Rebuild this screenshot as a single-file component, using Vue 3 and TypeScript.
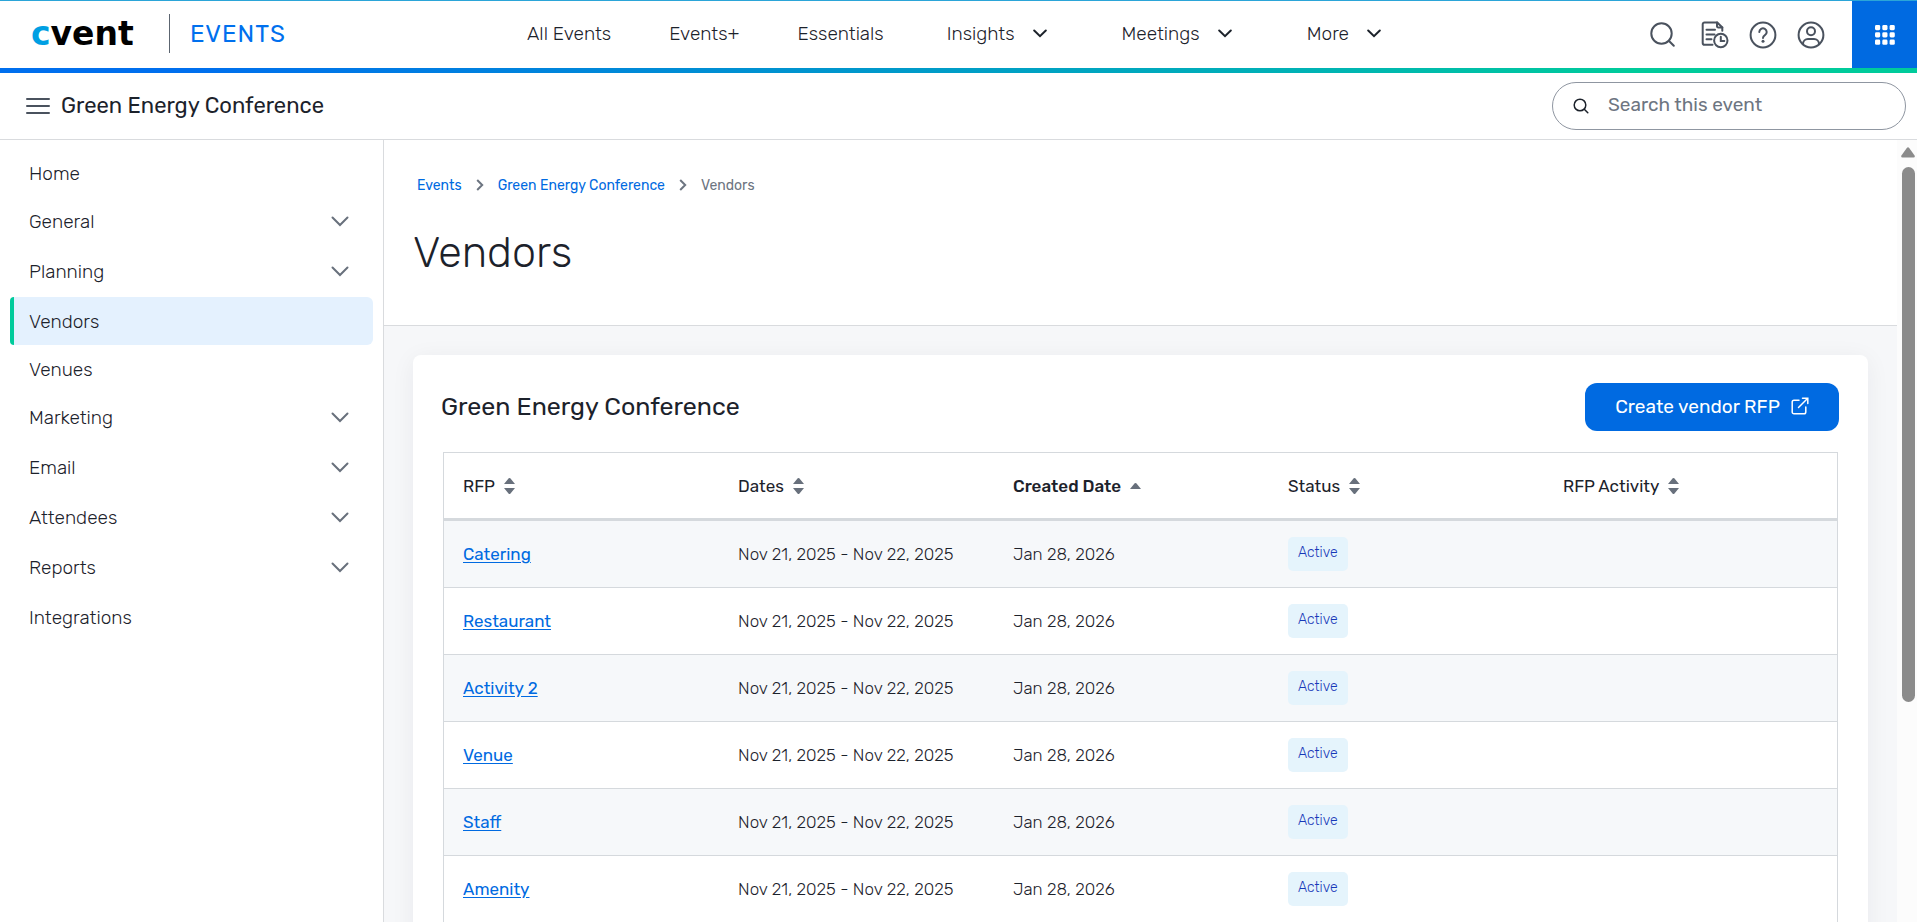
<script setup lang="ts">
import { ref } from 'vue'

interface NavItem {
  label: string
  menu?: boolean
}

interface Rfp {
  name: string
  dates: string
  created: string
  status: string
}

const topNav: NavItem[] = [
  { label: 'All Events' },
  { label: 'Events+' },
  { label: 'Essentials' },
  { label: 'Insights', menu: true },
  { label: 'Meetings', menu: true },
  { label: 'More', menu: true },
]

const sideNav: NavItem[] = [
  { label: 'Home' },
  { label: 'General', menu: true },
  { label: 'Planning', menu: true },
  { label: 'Vendors' },
  { label: 'Venues' },
  { label: 'Marketing', menu: true },
  { label: 'Email', menu: true },
  { label: 'Attendees', menu: true },
  { label: 'Reports', menu: true },
  { label: 'Integrations' },
]

const columns: string[] = ['RFP', 'Dates', 'Created Date', 'Status', 'RFP Activity']
const sortedBy = ref('Created Date')
const current = ref('Vendors')
const query = ref('')

const rows: Rfp[] = ['Catering', 'Restaurant', 'Activity 2', 'Venue', 'Staff', 'Amenity'].map((name) => ({
  name,
  dates: 'Nov 21, 2025 - Nov 22, 2025',
  created: 'Jan 28, 2026',
  status: 'Active',
}))
</script>

<template>
  <div class="app">
    <header class="topbar">
      <div class="brand">
        <a class="logo" href="#" aria-label="cvent"><span class="logo-c">c</span>vent</a>
        <span class="brand-rule"></span>
        <span class="product">EVENTS</span>
      </div>
      <nav class="topnav" aria-label="Main">
        <template v-for="item in topNav" :key="item.label">
          <button v-if="item.menu" type="button" class="topnav-item topnav-menu">
            {{ item.label }}
            <svg width="14" height="9" viewBox="0 0 14 9" aria-hidden="true"><path d="M1.2 1.5 7 7.2l5.8-5.7" /></svg>
          </button>
          <a v-else href="#" class="topnav-item">{{ item.label }}</a>
        </template>
      </nav>
      <div class="tools">
        <button type="button" aria-label="Search">
          <svg width="32" height="28" viewBox="0 0 32 28"><circle cx="12.500" cy="12.500" r="10.200" /><path d="m19.800 19.800 5 5" /></svg>
        </button>
        <button type="button" aria-label="Recent items">
          <svg width="28" height="28" viewBox="0 0 28 28">
            <path d="M11.500 23.700H3.500a1.800 1.800 0 0 1-1.800-1.800V3.300a1.800 1.800 0 0 1 1.800-1.800h12.800l5 5v3.200" />
            <path d="M16 1.500v3.700a1.300 1.300 0 0 0 1.300 1.300h4M5.500 8.700h8.500M5.500 13.500h8M5.500 18.300h5" />
            <circle cx="19.800" cy="19.500" r="6.700" /><path d="M19.800 15.800v4.200h3.500" />
          </svg>
        </button>
        <button type="button" aria-label="Help">
          <svg width="28" height="28" viewBox="0 0 28 28">
            <circle cx="14" cy="14" r="12.400" />
            <path d="M10.300 11a3.700 3.700 0 1 1 5.600 3.200c-1.300.8-1.900 1.300-1.900 2.800" /><circle class="dot" cx="14" cy="20.300" r="1.500" />
          </svg>
        </button>
        <button type="button" aria-label="Account">
          <svg width="28" height="28" viewBox="0 0 28 28">
            <circle cx="14" cy="14" r="12.400" /><circle cx="14" cy="10.200" r="4" />
            <path d="M6 23.200c0-3.300 2.300-5.200 5-5.200h6c2.700 0 5 1.900 5 5.200" />
          </svg>
        </button>
        <button type="button" class="apps" aria-label="Applications">
          <svg width="20" height="20" viewBox="0 0 20 20">
            <template v-for="r in 3" :key="r">
              <rect v-for="c in 3" :key="c" :x="(c - 1) * 7.3" :y="(r - 1) * 7.3" width="5.200" height="5.200" rx="1.400" />
            </template>
          </svg>
        </button>
      </div>
    </header>

    <div class="eventbar">
      <button type="button" class="burger" aria-label="Toggle navigation">
        <svg width="24" height="18" viewBox="0 0 24 18"><path d="M1 2h22M1 9h22M1 16h22" /></svg>
      </button>
      <span class="event-name">Green Energy Conference</span>
      <label class="search">
        <svg width="16" height="16" viewBox="0 0 16 16" aria-hidden="true"><circle cx="7" cy="7" r="5.800" /><path d="m11.300 11.300 3.500 3.500" /></svg>
        <input v-model="query" type="search" placeholder="Search this event" aria-label="Search this event" />
      </label>
    </div>

    <div class="body">
      <nav class="sidebar" aria-label="Event">
        <template v-for="item in sideNav" :key="item.label">
          <button v-if="item.menu" type="button" class="side-item side-menu">
            {{ item.label }}
            <svg width="18" height="11" viewBox="0 0 18 11" aria-hidden="true"><path d="m1.500 1.500 7.500 7.500 7.500-7.500" /></svg>
          </button>
          <a v-else href="#" class="side-item" :class="{ active: item.label === current }">{{ item.label }}</a>
        </template>
      </nav>

      <main class="main">
        <div class="page-head">
          <nav class="crumbs" aria-label="Breadcrumb">
            <a href="#">Events</a>
            <svg width="8" height="12" viewBox="0 0 8 12" aria-hidden="true"><path d="m1.200 1 5 5-5 5" /></svg>
            <a href="#">Green Energy Conference</a>
            <svg width="8" height="12" viewBox="0 0 8 12" aria-hidden="true"><path d="m1.200 1 5 5-5 5" /></svg>
            <span>Vendors</span>
          </nav>
          <h1>Vendors</h1>
        </div>

        <section class="card">
          <div class="card-head">
            <h2>Green Energy Conference</h2>
            <button type="button" class="create">
              Create vendor RFP
              <svg width="18" height="18" viewBox="0 0 18 18" aria-hidden="true">
                <path d="M8 3.200H3a1.800 1.800 0 0 0-1.800 1.800v10A1.800 1.800 0 0 0 3 16.800h10a1.800 1.800 0 0 0 1.800-1.800v-5M11.500 1.200h5.300v5.300M16.500 1.500 7.500 10.500" />
              </svg>
            </button>
          </div>
          <table>
            <thead>
              <tr>
                <th v-for="col in columns" :key="col" scope="col" :aria-sort="col === sortedBy ? 'ascending' : 'none'">
                  <button type="button" class="sort" :class="{ sorted: col === sortedBy }">
                    {{ col }}
                    <svg v-if="col === sortedBy" width="11" height="18" viewBox="0 0 11 18" aria-hidden="true"><path d="M0 12 4.700 6.300q.8-.8 1.600 0L11 12z" /></svg>
                    <svg v-else width="11" height="18" viewBox="0 0 11 18" aria-hidden="true"><path d="M0 7 4.700 1.300q.8-.8 1.600 0L11 7zM0 11l4.700 5.700q.8.8 1.600 0L11 11z" /></svg>
                  </button>
                </th>
              </tr>
            </thead>
            <tbody>
              <tr v-for="row in rows" :key="row.name">
                <td><a href="#">{{ row.name }}</a></td>
                <td>{{ row.dates }}</td>
                <td>{{ row.created }}</td>
                <td><span class="badge">{{ row.status }}</span></td>
                <td></td>
              </tr>
            </tbody>
          </table>
        </section>
      </main>

      <div class="scrollbar" aria-hidden="true">
        <svg width="14" height="11" viewBox="0 0 14 11"><path d="M5.800 1 .4 8.600Q-.4 10.500 1.500 10.500h11q1.900 0 1.100-1.900L8.200 1Q7-.4 5.800 1z" /></svg>
        <div class="thumb"></div>
      </div>
    </div>
  </div>
</template>

<style>
body {
  margin: 0;
}
</style>

<style scoped>
.app {
  display: flex;
  flex-direction: column;
  height: 100vh;
  overflow: hidden;
  background: #fff;
  color: #1c222b;
  font-family: Rubik, Roboto, "Liberation Sans", sans-serif;
  font-size: 19px;
  font-weight: 300;
}
.app * {
  box-sizing: border-box;
}
button {
  padding: 0;
  border: 0;
  background: none;
  color: inherit;
  font: inherit;
  cursor: pointer;
}
a {
  color: inherit;
  text-decoration: none;
}
svg {
  display: block;
  flex: none;
  fill: none;
  stroke: currentColor;
  stroke-width: 2;
  stroke-linecap: round;
}
.topbar {
  display: flex;
  flex: none;
  height: 73px;
  border-top: 1px solid #2ba5d8;
  border-bottom: 5px solid transparent;
  background: linear-gradient(#fff, #fff) padding-box, linear-gradient(90deg, #006fee 10%, #00b2b5 68%, #00cb9b 85%) border-box;
}
.brand {
  display: flex;
  align-items: center;
  flex: 0 0 498px;
  padding-left: 31px;
}
.logo {
  width: 138px;
  color: #000;
  font: 700 33px/36px "DejaVu Sans", sans-serif;
}
.logo-c {
  color: #009fe3;
}
.brand-rule {
  width: 1px;
  height: 39px;
  margin-right: 20px;
  background: #5c6570;
}
.product {
  color: #0070ee;
  font-size: 24px;
  font-weight: 400;
  letter-spacing: 1px;
}
.brand,
.topnav {
  padding-bottom: 2px;
}
.topnav {
  display: flex;
  flex: 1;
}
.topnav-item {
  display: flex;
  align-items: center;
  padding: 0 29px;
}
.topnav-menu {
  gap: 18px;
  padding: 0 44px 0 34px;
}
.topnav-menu + .topnav-menu {
  padding-left: 31px;
}
.topnav-menu svg {
  color: #1c222b;
}
.tools {
  display: flex;
  align-items: center;
  gap: 20px;
  color: #4a525e;
}
.apps {
  display: grid;
  place-items: center;
  width: 65px;
  height: 100%;
  margin-left: 7px;
  background: #006ae1;
  color: #fff;
}
.apps svg,
.dot {
  fill: currentColor;
  stroke: none;
}
.eventbar {
  display: flex;
  align-items: center;
  flex: none;
  height: 67px;
  padding: 0 11px 0 26px;
  border-bottom: 1px solid #d9dbde;
}
.burger {
  margin-right: 11px;
  color: #4a525e;
}
.event-name {
  flex: 1;
  padding-bottom: 2px;
  font-size: 22px;
  font-weight: 400;
}
.search {
  display: flex;
  align-items: center;
  gap: 19px;
  width: 354px;
  height: 48px;
  padding: 0 20px;
  border: 1px solid #8f96a1;
  border-radius: 24px;
  color: #1c222b;
}
.search svg {
  stroke-width: 1.5;
}
.search input {
  flex: 1;
  min-width: 0;
  padding: 0 0 3px;
  border: 0;
  outline: 0;
  background: none;
  color: inherit;
  font: inherit;
  font-weight: 400;
}
.search input::placeholder {
  color: #6d7581;
}
.body {
  display: grid;
  grid-template-columns: 384px minmax(0, 1fr) 20px;
  flex: 1;
  min-height: 0;
}
.sidebar {
  padding: 9px 10px 0;
  border-right: 1px solid #d9dbde;
}
.side-item {
  display: flex;
  align-items: center;
  justify-content: space-between;
  width: 100%;
  height: 48px;
  padding: 0 24px 0 15px;
  border-left: 4px solid transparent;
}
.side-menu {
  margin-bottom: 2px;
}
.side-menu svg {
  color: #68707c;
}
.active {
  border-left-color: #00cb9b;
  border-radius: 4px 6px 6px 4px;
  background: #e4f1fe;
}
.main {
  overflow: hidden;
  background: #f6f7f9;
}
.page-head {
  height: 186px;
  padding: 33px 29px 0;
  border-bottom: 1px solid #d9dbde;
  background: #fff;
}
.crumbs {
  display: flex;
  align-items: center;
  gap: 14px;
  height: 24px;
  padding-left: 4px;
  color: #6d7581;
  font-size: 14px;
  font-weight: 400;
}
.crumbs a {
  color: #006ae1;
}
.crumbs svg {
  stroke-linecap: butt;
}
h1 {
  margin: 26px 0 0;
  font-size: 43px;
  font-weight: 300;
  line-height: 60px;
}
.card {
  margin: 29px 29px 0;
  padding: 28px 29px 28px 28px;
  border-radius: 8px;
  background: #fff;
  box-shadow: 0 4px 24px rgba(28, 34, 43, 0.06);
}
.card-head {
  display: flex;
  align-items: center;
  justify-content: space-between;
  margin-bottom: 21px;
}
h2 {
  margin: 0;
  padding-bottom: 2px;
  font-size: 25px;
  font-weight: 400;
}
.create {
  display: flex;
  align-items: center;
  justify-content: center;
  gap: 11px;
  width: 254px;
  height: 48px;
  padding-bottom: 2px;
  border-radius: 12px;
  background: #006ae1;
  color: #fff;
  font-weight: 400;
}
.create svg {
  stroke-width: 1.5;
}
table {
  width: calc(100% - 3px);
  margin: 0 1px 0 2px;
  border: 1px solid #d5d9dd;
  border-spacing: 0;
  table-layout: fixed;
  font-size: 17px;
}
th,
td {
  height: 67px;
  padding: 0 19px;
  border-bottom: 1px solid #d5d9dd;
  text-align: left;
}
th {
  height: 68px;
  width: 275px;
  border-bottom-width: 3px;
  font-weight: 400;
}
th:last-child {
  width: auto;
}
.sort {
  display: flex;
  align-items: center;
  gap: 9px;
}
.sorted {
  font-weight: 500;
}
.sort svg {
  color: #68707c;
  fill: currentColor;
  stroke: none;
}
tbody tr:nth-child(odd) {
  background: #f6f8fa;
}
td a {
  color: #006ae1;
  font-weight: 400;
  text-decoration: underline;
  text-underline-offset: 2px;
}
.badge {
  display: inline-block;
  padding: 0 10px 2px;
  border-radius: 5px;
  background: #e5f4fc;
  color: #1738b8;
  font-size: 14px;
  line-height: 32px;
  vertical-align: middle;
}
.scrollbar {
  display: flex;
  flex-direction: column;
  align-items: center;
  gap: 9px;
  padding: 7px 0 0 2px;
  background: #fcfcfc;
  color: #8b8b8b;
}
.scrollbar svg {
  fill: currentColor;
  stroke: none;
}
.thumb {
  width: 13px;
  height: 69%;
  border-radius: 7px;
  background: #8b8b8b;
}
</style>
